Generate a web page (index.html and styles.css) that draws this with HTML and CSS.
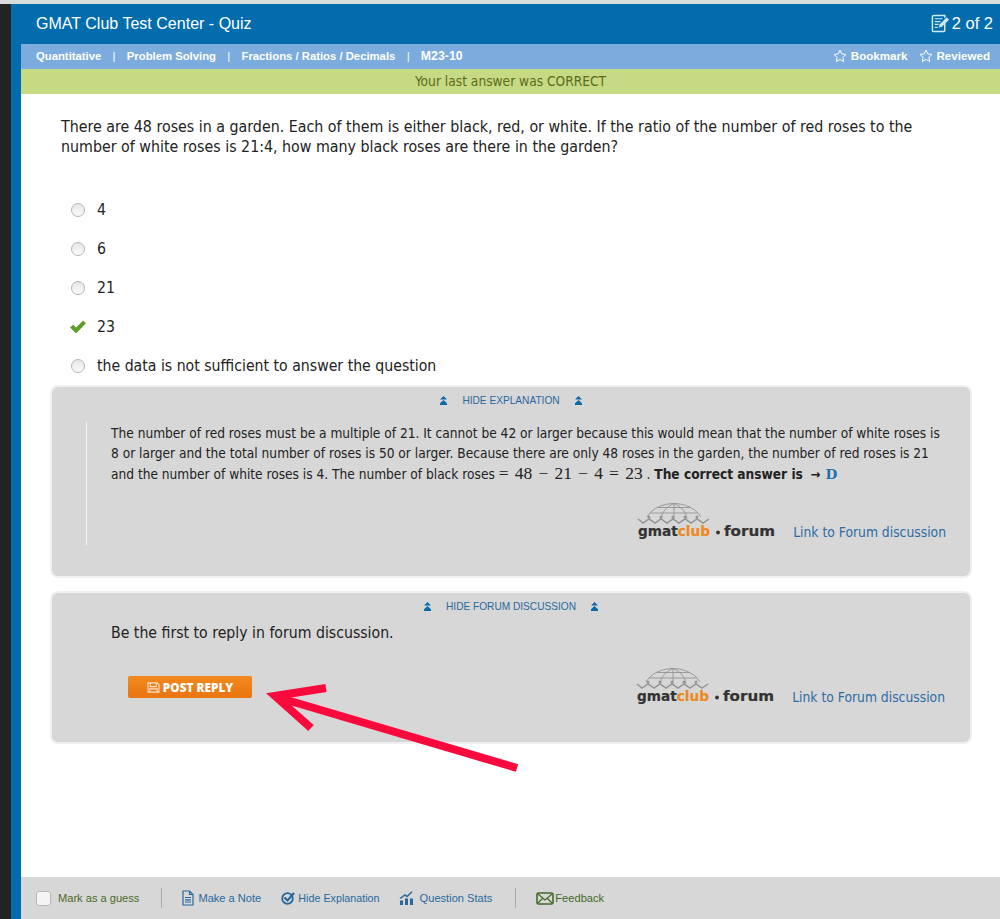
FILE: index.html
```html
<!DOCTYPE html>
<html lang="en">
<head>
<meta charset="utf-8">
<title>GMAT Club Test Center - Quiz</title>
<link rel="stylesheet" href="styles.css">
</head>
<body>
<svg width="0" height="0" class="defs">
  <defs>
    <symbol id="star" viewBox="0 0 16 16"><path d="M8 1.200 10 5.600 14.800 6.200 11.300 9.500 12.200 14.300 8 12 3.800 14.300 4.700 9.500 1.200 6.200 6 5.600Z" fill="none" stroke="currentColor" stroke-width="1.100" stroke-linejoin="round"/></symbol>
    <symbol id="dbl" viewBox="0 0 9 9"><path d="M4.500 0 8 3.400H1Z M4.500 4 8 7.200V9H1V7.200Z" fill="currentColor"/></symbol>
    <symbol id="logo" viewBox="0 0 138 36">
      <g fill="none" stroke="#949494" stroke-width="0.900">
        <path d="M10 14C15 5 27 0.500 37 0.500S59 5 64 14"/>
        <path d="M37 0.500V16M37 0.500C29 4 25 9 24 16M37 0.500C45 4 49 9 50 16M20 4.500H54M13 10H61"/>
        <path d="M1 16 6 20 12 16 18 20 24 16 30 20 36 16 42 20 48 16 54 20 60 16 66 20 72 16" stroke-width="1.500"/>
      </g>
      <g fill="#949494"><circle cx="12" cy="14" r="1.500"/><circle cx="24" cy="14" r="1.500"/><circle cx="36" cy="14" r="1.500"/><circle cx="48" cy="14" r="1.500"/><circle cx="60" cy="14" r="1.500"/></g>
      <text x="1" y="33" class="logo-text" textLength="72" lengthAdjust="spacingAndGlyphs">gmat<tspan class="logo-club">club</tspan></text>
      <circle cx="81" cy="29.500" r="1.900" fill="#333"/>
      <text x="87" y="33" class="logo-text" textLength="51" lengthAdjust="spacingAndGlyphs">forum</text>
    </symbol>
  </defs>
</svg>
<div class="topline"></div>
<div class="shell">
  <div class="rail"></div>
  <div class="app">
    <header class="titlebar">
      <h1 class="title">GMAT Club Test Center - Quiz</h1>
      <div class="count">
        <svg class="count-icon" viewBox="0 0 20 20"><path d="M14.500 8V17a1.500 1.500 0 0 1-1.500 1.500H3A1.500 1.500 0 0 1 1.500 17V3A1.500 1.500 0 0 1 3 1.500H14.500V4" fill="none" stroke="currentColor" stroke-width="1.600"/><path d="M4 5H12M4 8H10M4 11H8M4 14H7" stroke="currentColor" stroke-width="1.300"/><path d="M8 14.500 9 11 16.500 3.500 19 6 11.500 13.500Z" fill="currentColor"/></svg>
        <span>2 of 2</span>
      </div>
    </header>
    <div class="crumbs">
      <div class="crumb-list">
        <span>Quantitative</span><i>|</i><span>Problem Solving</span><i>|</i><span>Fractions / Ratios / Decimals</span><i>|</i><span class="code">M23-10</span>
      </div>
      <div class="marks">
        <span class="mark"><svg class="star"><use href="#star"/></svg>Bookmark</span>
        <span class="mark"><svg class="star"><use href="#star"/></svg>Reviewed</span>
      </div>
    </div>
    <div class="status">Your last answer was CORRECT</div>
    <main class="content">
      <p class="question">There are 48 roses in a garden. Each of them is either black, red, or white. If the ratio of the number of red roses to the number of white roses is 21:4, how many black roses are there in the garden?</p>
      <ul class="answers">
        <li><span class="radio"></span>4</li>
        <li><span class="radio"></span>6</li>
        <li><span class="radio"></span>21</li>
        <li><svg class="check" viewBox="0 0 17 14"><path d="M0.500 7.500 3.500 5 6.500 8 14 0.500 16.500 3 6.500 13.500Z" fill="#5f9e26" stroke="#5f9e26" stroke-width="0.800"/></svg>23</li>
        <li><span class="radio"></span>the data is not sufficient to answer the question</li>
      </ul>
      <section class="panel panel-explain">
        <div class="toggle"><svg class="dbl"><use href="#dbl"/></svg><span>HIDE EXPLANATION</span><svg class="dbl"><use href="#dbl"/></svg></div>
        <div class="explain-body">
          <p class="explain-text"><span>The number of red roses must be a multiple of 21. It cannot be 42 or larger because this would mean that the number of white roses is 8 or larger and the total number of roses is 50 or larger. Because there are only 48 roses in the garden, the number of red roses is 21</span> <span>and the number of white roses is 4. The number of black roses</span> <span class="math">= 48 − 21 − 4 = 23</span> <span>.</span> <b>The correct answer is</b> <span class="arrow">→</span> <b class="key">D</b></p>
          <div class="forum-row">
            <svg class="logo"><use href="#logo"/></svg>
            <a class="forum-link">Link to Forum discussion</a>
          </div>
        </div>
      </section>
      <section class="panel panel-forum">
        <div class="toggle"><svg class="dbl"><use href="#dbl"/></svg><span>HIDE FORUM DISCUSSION</span><svg class="dbl"><use href="#dbl"/></svg></div>
        <p class="first">Be the first to reply in forum discussion.</p>
        <div class="reply-row">
          <button class="reply"><svg class="disk" viewBox="0 0 14 12"><path d="M1 1H11L13 3V11H1Z M3.500 1V5H10V1 M3 11V7.500H11V11" fill="none" stroke="currentColor" stroke-width="1.200"/></svg>POST REPLY</button>
          <div class="forum-row">
            <svg class="logo"><use href="#logo"/></svg>
            <a class="forum-link">Link to Forum discussion</a>
          </div>
        </div>
      </section>
      <svg class="pointer" viewBox="0 0 270 100"><path d="M257 88 20 18" fill="none" stroke="#fa0a3c" stroke-width="8"/><path d="M66 8 15 16 51 48" fill="none" stroke="#fa0a3c" stroke-width="8"/></svg>
    </main>
    <footer class="toolbar">
      <label class="tool guess"><span class="box"></span>Mark as a guess</label>
      <span class="sep"></span>
      <a class="tool note"><svg class="ico ico-note" viewBox="0 0 12 16"><path d="M1 1H7.500L11 4.500V15H1Z M7.500 1V4.500H11 M3 7.500H9M3 9.800H9M3 12H9" fill="none" stroke="currentColor" stroke-width="1.200"/></svg><span>Make a Note</span></a>
      <a class="tool hide"><svg class="ico ico-hide" viewBox="0 0 14 14"><circle cx="6.500" cy="7.500" r="5.300" fill="none" stroke="currentColor" stroke-width="1.800"/><path d="M3.500 6.500 6.500 9.500 13 2" fill="none" stroke="currentColor" stroke-width="2.200"/></svg><span>Hide Explanation</span></a>
      <a class="tool stats"><svg class="ico ico-stats" viewBox="0 0 15 14"><path d="M1 14V9.500H4V14ZM6 14V7.500H9V14ZM11 14V7.500H14V14Z" fill="currentColor"/><path d="M1 7.500 6 4 8 5.500 13 0.800" fill="none" stroke="currentColor" stroke-width="1.500"/></svg><span>Question Stats</span></a>
      <span class="sep sep-2"></span>
      <a class="tool feedback"><svg class="ico ico-mail" viewBox="0 0 18 13"><rect x="1" y="1" width="16" height="11" rx="1.500" fill="none" stroke="currentColor" stroke-width="1.600"/><path d="M2 2 9 8 16 2M2 11 6.500 6.500M16 11 11.500 6.500" fill="none" stroke="currentColor" stroke-width="1.200"/></svg><span>Feedback</span></a>
    </footer>
  </div>
</div>
</body>
</html>
```
FILE: styles.css
```css
* { box-sizing: border-box; }
html, body { margin: 0; height: 919px; overflow: hidden; }
body { font-family: "Liberation Sans", Arial, sans-serif; background: #fff; color: #222; }
.defs { position: absolute; }
.topline { height: 4px; background: #d9dcdc; }
.shell { display: flex; height: 915px; }
.rail { width: 11px; background: #232323; }
.app { flex: 1; display: flex; flex-direction: column; background: #fff; border-left: 10px solid #036cad; min-width: 0; }
.titlebar { height: 40px; margin-left: -10px; padding: 0 7px 2px 25px; background: #036cad; color: #fff; display: flex; align-items: center; justify-content: space-between; }
.title { margin: 0; font-size: 16.050px; font-weight: 400; }
.count { display: flex; align-items: center; gap: 2px; font-size: 16.500px; }
.count-icon { width: 19px; height: 19px; color: #cfe6f5; }
.crumbs { height: 25px; background: #7cacde; color: #fff; font-size: 11.300px; font-weight: 700; display: flex; align-items: center; justify-content: space-between; padding: 0 10px 2px 15px; }
.crumb-list { display: flex; align-items: baseline; }
.crumb-list i { font-style: normal; font-weight: 400; margin: 0 11.300px; }
.code { font-size: 12.300px; }
.marks { display: flex; gap: 11px; font-size: 11.600px; }
.mark { display: flex; align-items: center; gap: 4px; }
.star { width: 14px; height: 14px; }
.status { height: 25px; background: #c6d983; color: #5b6b1c; font: 13.650px/25px "DejaVu Sans Condensed", "Noto Sans", sans-serif; text-align: center; }
.content { flex: 1; position: relative; padding: 0 30px 0 31px; font-family: "DejaVu Sans Condensed", "Noto Sans", sans-serif; min-height: 0; }
.question { margin: 23px 0 0 9px; width: 870px; font-size: 15.830px; line-height: 20px; color: #222; }
.answers { list-style: none; margin: 33px 0 0; padding: 0 0 0 19px; font-size: 15.700px; }
.answers li { height: 39px; display: flex; align-items: center; color: #222; }
.radio { width: 14px; height: 14px; margin-right: 12px; border-radius: 50%; border: 1px solid #b5b5b5; background: linear-gradient(#e6e6e6, #fbfbfb); }
.check { width: 16px; height: 14px; margin: 0 11px 0 -1px; }
.panel { background: #d7d7d7; border-radius: 6px; box-shadow: 0 0 0 2px #f0f0f0; }
.panel-explain { height: 189px; margin-top: 2px; padding-top: 8px; }
.panel-forum { height: 149px; margin-top: 17px; padding-top: 8px; }
.toggle { display: flex; justify-content: center; align-items: center; gap: 14px; height: 11px; font: 10.150px/11px "Liberation Sans", sans-serif; color: #27699e; }
.dbl { width: 9px; height: 9px; color: #0a6bab; }
.explain-body { margin: 16px 24px 0 34px; border-left: 1px solid #f5f5f5; padding: 1px 0 0 24px; height: 123px; }
.explain-text { margin: 0; font-size: 13.600px; line-height: 20px; color: #222; }
.math { font: 17.500px/20px "Liberation Serif", serif; word-spacing: 1.800px; }
.arrow { color: #222; font-size: 13px; font-weight: 700; margin: 0 1px 0 4px; }
.key { color: #1f6fb0; font-family: "DejaVu Serif", serif; }
.forum-row { display: flex; align-items: flex-end; justify-content: flex-end; gap: 18px; }
.explain-body .forum-row { margin-top: 18px; }
.logo { width: 138px; height: 36px; display: block; }
.logo-text { font: 700 13.500px "DejaVu Sans", sans-serif; fill: #333; stroke: #333; stroke-width: 0.200px; }
.logo-club { fill: #ec8a24; stroke: #ec8a24; }
.forum-link { font-size: 13.750px; color: #2d6ca5; line-height: 20px; margin-bottom: -3px; }
.first { margin: 11px 0 0 59px; font-size: 15.700px; color: #222; line-height: 20px; }
.reply-row { display: flex; align-items: flex-start; justify-content: space-between; margin: 0 25px 0 76px; padding-top: 25px; }
.reply { width: 124px; height: 22px; margin-top: 8px; border: 0; border-radius: 2px; padding: 0; display: flex; align-items: center; justify-content: center; gap: 3px; background: linear-gradient(#f08a1e, #ea7410); color: #fff; font: 800 11.800px "Open Sans", sans-serif; }
.disk { width: 13px; height: 11px; color: #f7e3cc; }
.pointer { position: absolute; left: 239px; top: 586px; width: 270px; height: 100px; }
.toolbar { height: 42px; background: #d7d7d7; display: flex; align-items: center; padding-left: 15px; font-size: 11.100px; }
.tool { display: flex; align-items: center; color: #27699e; }
.guess { color: #4b6a25; }
.box { width: 15px; height: 15px; border-radius: 3px; border: 1px solid #b8b8b8; background: #f4f4f4; margin-right: 7px; }
.sep { width: 1px; height: 20px; background: #aaa; margin: 0 20px 0 22px; }
.sep-2 { margin: 0 20px 0 23px; }
.ico { margin-right: 5px; color: #27699e; }
.ico-note { width: 12px; height: 16px; margin-right: 4px; }
.ico-hide { width: 14px; height: 14px; margin-right: 3px; }
.ico-stats { width: 15px; height: 14px; margin-right: 6px; }
.note { margin-right: 20px; }
.hide { margin-right: 19px; font-size: 10.750px; }
.feedback { color: #416a27; }
.ico-mail { width: 18px; height: 13px; margin-right: 1px; color: #416a27; }
```
